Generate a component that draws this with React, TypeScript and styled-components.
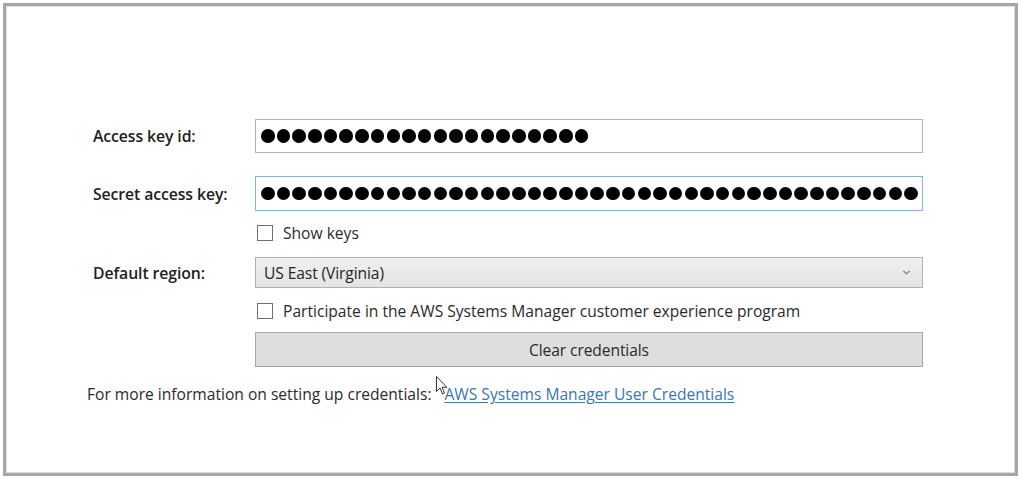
import React from "react";
import styled, { createGlobalStyle } from "styled-components";
import { ChevronDown } from "lucide-react";

const Global = createGlobalStyle`
  html, body { margin: 0; padding: 0; background: #ffffff; }
  body { font-family: "Open Sans", "Noto Sans", "Liberation Sans", sans-serif; color: #222; }
  * { box-sizing: border-box; }
`;

const Frame = styled.div`
  margin: 3px 0 0 3px;
  width: 1015px;
  height: 473px;
  border: 3px solid #a6a6a6;
  box-shadow: inset 0 0 0 1px #dcdcdc;
  background: #fff;
  padding: 113px 0 0 81px;
`;

const Form = styled.div`
  display: flex;
  flex-direction: column;
  padding-left: 6px;
  width: 836px;
`;

const Row = styled.div<{ $mt: number; $h: number }>`
  display: flex;
  align-items: center;
  margin-top: ${(p) => p.$mt}px;
  height: ${(p) => p.$h}px;
`;

const Label = styled.div`
  width: 162px;
  flex: none;
  font-size: 15.8px;
  font-weight: 600;
  color: #1e1e1e;
  letter-spacing: -0.1px;
`;

const Field = styled.div<{ $focused?: boolean }>`
  width: 669px;
  height: 100%;
  border: 1px solid ${(p) => (p.$focused ? "#86b5e2" : "#b4b4b4")};
  background: #fff;
  display: flex;
  align-items: center;
  padding-left: 5px;
  gap: 2.2px;
`;

const Dot = styled.span`
  width: 13.5px;
  height: 13.5px;
  border-radius: 50%;
  background: #000;
  flex: none;
`;

const CheckRow = styled.label`
  display: flex;
  align-items: center;
  gap: 10px;
  font-size: 15.6px;
  color: #2a2a2a;
  margin-left: 2px;
`;

const Box = styled.span`
  width: 16px;
  height: 16px;
  border: 1px solid #6f6f6f;
  background: #fff;
  flex: none;
`;

const Select = styled.div`
  width: 669px;
  height: 100%;
  border: 1px solid #b2b2b2;
  background: linear-gradient(#efefef, #e4e4e4);
  display: flex;
  align-items: center;
  justify-content: space-between;
  padding: 0 10px 0 8px;
  font-size: 15.6px;
  color: #252525;
  letter-spacing: -0.1px;
`;

const Button = styled.div`
  width: 669px;
  height: 100%;
  border: 1px solid #a5a5a5;
  background: #dedede;
  display: flex;
  align-items: center;
  justify-content: center;
  font-size: 15.6px;
  color: #2a2a2a;
  letter-spacing: -0.1px;
`;

const Footer = styled.div`
  position: relative;
  margin-top: 17px;
  font-size: 15.6px;
  line-height: 21px;
  color: #2a2a2a;
  display: flex;
  gap: 13px;
`;

const Link = styled.a`
  color: #3a76b4;
  text-decoration: underline;
  text-underline-offset: 2px;
`;

const Cursor = styled.svg`
  position: absolute;
  left: 349px;
  top: -8px;
`;

const Dots = ({ n }: { n: number }) => (
  <>
    {Array.from({ length: n }).map((_, i) => (
      <Dot key={i} />
    ))}
  </>
);

export default function App() {
  return (
    <>
      <Global />
      <Frame>
        <Form>
          <Row $mt={0} $h={34}>
            <Label>Access key id:</Label>
            <Field>
              <Dots n={21} />
            </Field>
          </Row>
          <Row $mt={23} $h={35}>
            <Label>Secret access key:</Label>
            <Field $focused>
              <Dots n={42} />
            </Field>
          </Row>
          <Row $mt={14} $h={16}>
            <Label />
            <CheckRow>
              <Box />
              Show keys
            </CheckRow>
          </Row>
          <Row $mt={16} $h={31}>
            <Label>Default region:</Label>
            <Select>
              <span>US East (Virginia)</span>
              <ChevronDown size={11} color="#777" strokeWidth={2.5} />
            </Select>
          </Row>
          <Row $mt={15} $h={16}>
            <Label />
            <CheckRow>
              <Box />
              Participate in the AWS Systems Manager customer experience program
            </CheckRow>
          </Row>
          <Row $mt={13} $h={35}>
            <Label />
            <Button>Clear credentials</Button>
          </Row>
        </Form>
        <Footer>
          <span>For more information on setting up credentials:</span>
          <Link href="#">AWS Systems Manager User Credentials</Link>
          <Cursor width="12" height="20" viewBox="0 0 12 20">
            <path
              d="M0.5 0.5 L0.5 15.5 L4 12 L6.5 18 L8.5 17 L6 11.3 L10.8 11.3 Z"
              fill="#fff"
              stroke="#333"
              strokeWidth="1"
            />
          </Cursor>
        </Footer>
      </Frame>
    </>
  );
}
